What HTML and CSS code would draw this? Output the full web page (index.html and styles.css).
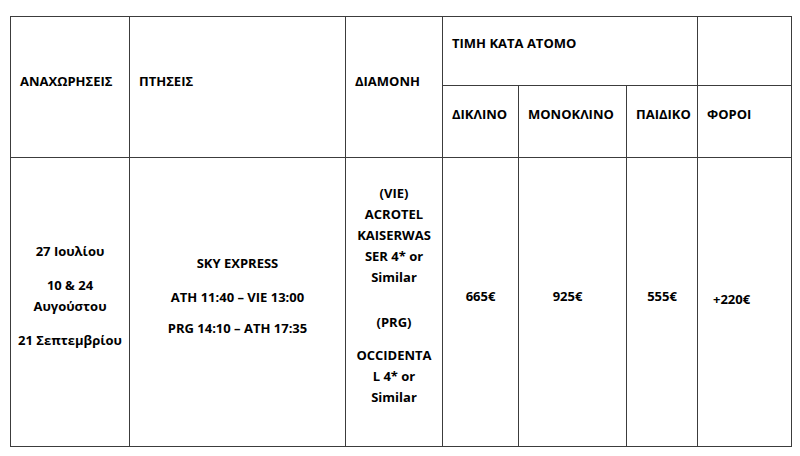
FILE: index.html
```html
<!DOCTYPE html>
<html lang="el">
<head>
<meta charset="utf-8">
<title>Τιμές</title>
<link rel="stylesheet" href="styles.css">
</head>
<body>
<table class="prices">
  <colgroup>
    <col class="c-dep">
    <col class="c-fly">
    <col class="c-hotel">
    <col class="c-dbl">
    <col class="c-sgl">
    <col class="c-kid">
    <col class="c-tax">
  </colgroup>
  <thead>
    <tr class="r-head1">
      <th rowspan="2" class="th-tall">ΑΝΑΧΩΡΗΣΕΙΣ</th>
      <th rowspan="2" class="th-tall">ΠΤΗΣΕΙΣ</th>
      <th rowspan="2" class="th-tall">ΔΙΑΜΟΝΗ</th>
      <th colspan="3">ΤΙΜΗ ΚΑΤΑ ΑΤΟΜΟ</th>
      <th></th>
    </tr>
    <tr class="r-head2">
      <th>ΔΙΚΛΙΝΟ</th>
      <th>ΜΟΝΟΚΛΙΝΟ</th>
      <th>ΠΑΙΔΙΚΟ</th>
      <th>ΦΟΡΟΙ</th>
    </tr>
  </thead>
  <tbody>
    <tr class="r-body">
      <td class="center">
        <p>27 Ιουλίου</p>
        <p>10 &amp; 24<br>Αυγούστου</p>
        <p>21 Σεπτεμβρίου</p>
      </td>
      <td class="center flights">
        <p>SKY EXPRESS</p>
        <p>ATH 11:40 – VIE 13:00</p>
        <p>PRG 14:10 – ATH 17:35</p>
      </td>
      <td class="center hotel">
        <p>(VIE)<br>ACROTEL<br>KAISERWAS<br>SER 4* or<br>Similar</p>
        <p class="gap-big">(PRG)</p>
        <p>OCCIDENTA<br>L 4* or<br>Similar</p>
      </td>
      <td class="center price">665€</td>
      <td class="center price price-925">925€</td>
      <td class="center price">555€</td>
      <td class="price price-tax">+220€</td>
    </tr>
  </tbody>
</table>
</body>
</html>
```
FILE: styles.css
```css
html, body {
  margin: 0;
  padding: 0;
  background: #ffffff;
}

body {
  font-family: "Open Sans", "Noto Sans", "DejaVu Sans", sans-serif;
  font-weight: 700;
  font-size: 13px;
  color: #000000;
}

.prices {
  margin: 16px 0 0 10px;
  border-collapse: collapse;
  table-layout: fixed;
  width: 782px;
}

.c-dep { width: 119px; }
.c-fly { width: 216px; }
.c-hotel { width: 97px; }
.c-dbl { width: 76px; }
.c-sgl { width: 108px; }
.c-kid { width: 71px; }
.c-tax { width: 94px; }

.prices th,
.prices td {
  border: 1px solid #3c3c3c;
  padding: 0 0 15px 9px;
  vertical-align: middle;
  text-align: left;
  font-weight: 700;
  line-height: 21px;
  white-space: nowrap;
}

.r-head1 th { height: 53px; }
.r-head2 th { height: 56px; }
.prices th.th-tall { padding-bottom: 11px; }

.r-body td {
  height: 275px;
  padding: 0 0 13px 0;
}

.center { text-align: center !important; }

.prices p {
  margin: 0 0 13px 0;
}
.prices p:last-child { margin-bottom: 0; }

.flights p:nth-child(2) { margin-bottom: 10px; }

.hotel p:first-child { margin-bottom: 24px; }
.hotel p.gap-big { margin-bottom: 12px; }

.price { padding-bottom: 11px !important; }
.price-925 { padding-right: 10px !important; }
.price-tax {
  padding-left: 15px !important;
  padding-bottom: 6px !important;
}
```
